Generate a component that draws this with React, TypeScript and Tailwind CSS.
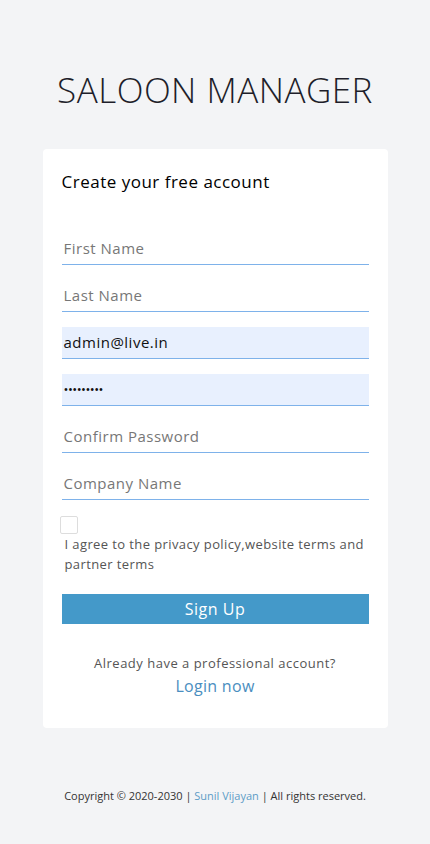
import React from 'react';

const fields = [
  { placeholder: 'First Name', value: '', filled: false },
  { placeholder: 'Last Name', value: '', filled: false },
  { placeholder: 'Email', value: 'admin@live.in', filled: true },
  { placeholder: 'Password', value: '•••••••••', filled: true, password: true },
  { placeholder: 'Confirm Password', value: '', filled: false },
  { placeholder: 'Company Name', value: '', filled: false },
];

export default function App() {
  return (
    <div
      className="min-h-[844px] bg-[#f3f4f6] flex flex-col items-center"
      style={{ fontFamily: '"Open Sans", "Liberation Sans", sans-serif' }}
    >
      <h1 className="mt-[70px] text-[35px] leading-[40px] font-light text-[#1e1e2a] tracking-[0.5px]">
        SALOON MANAGER
      </h1>

      <div className="mt-[39px] w-[345px] bg-white rounded-[4px] px-[19px] pt-[22px] pb-[32px]">
        <h2 className="text-[17px] leading-[22px] text-black tracking-[0.5px]">Create your free account</h2>

        <div className="mt-[40px] flex flex-col gap-[15px]">
          {fields.map((f) => (
            <div
              key={f.placeholder}
              className={`h-[32px] border-b border-[#7eb2ea] flex items-center px-[2px] text-[15px] tracking-[0.5px] ${
                f.filled ? 'bg-[#e8f0fe]' : ''
              }`}
            >
              {f.filled ? (
                <span className={`text-[#111] ${f.password ? 'tracking-[-0.5px] text-[13px]' : ''}`}>{f.value}</span>
              ) : (
                <span className="text-[#777]">{f.placeholder}</span>
              )}
            </div>
          ))}
        </div>

        <div className="mt-[16px] w-[18px] h-[18px] border border-[#ddd] rounded-[2px] -ml-[2px]" />
        <p className="pl-[3px] text-[13px] leading-[20px] text-[#555] tracking-[0.4px]">
          I agree to the privacy policy,website terms and partner terms
        </p>

        <button className="mt-[20px] w-full h-[30px] bg-[#4499c9] text-white text-[16px] tracking-[0.5px] flex items-center justify-center">
          Sign Up
        </button>

        <p className="mt-[30px] text-center text-[13px] leading-[18px] text-[#555] tracking-[0.5px]">
          Already have a professional account?
        </p>
        <p className="mt-[4px] text-center text-[16px] leading-[20px] font-medium text-[#4a8ec0] tracking-[0.3px]">
          Login now
        </p>
      </div>

      <p className="mt-[60px] text-[11px] text-[#333]">
        Copyright © 2020-2030 | <span className="text-[#5d9cc6]">Sunil Vijayan</span> | All rights reserved.
      </p>
    </div>
  );
}
